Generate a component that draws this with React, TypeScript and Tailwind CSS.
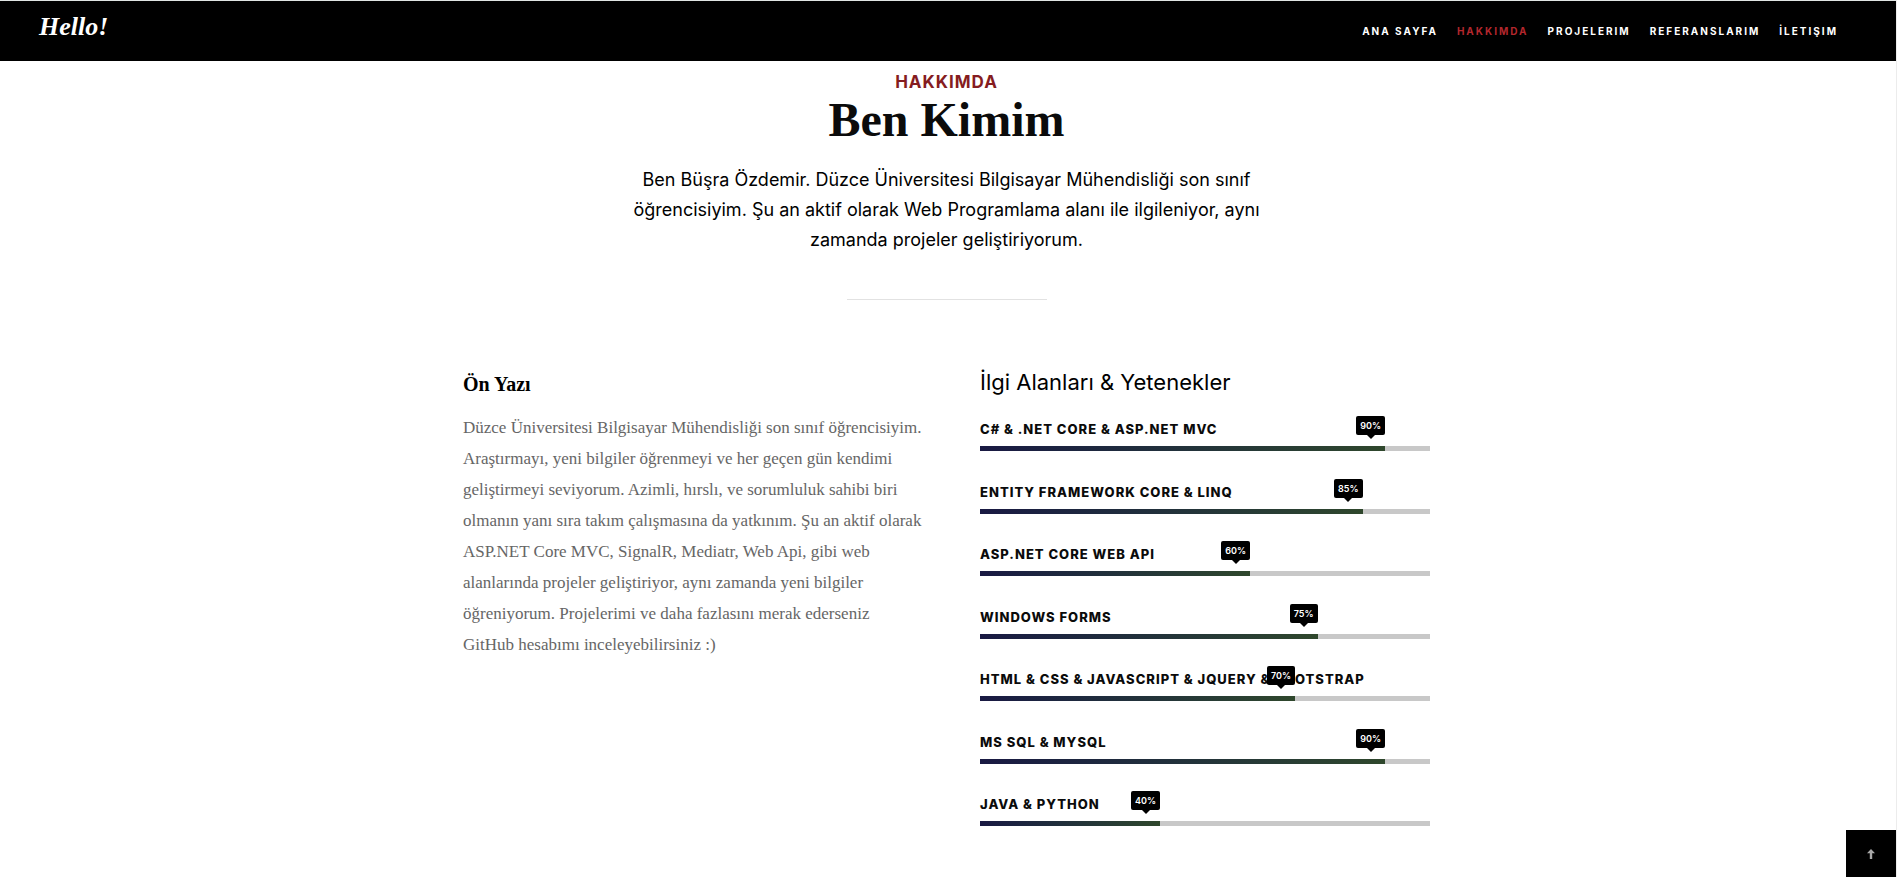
const navItems = [
  { label: "ANA SAYFA", href: "#home", active: false },
  { label: "HAKKIMDA", href: "#about", active: true },
  { label: "PROJELERIM", href: "#projects", active: false },
  { label: "REFERANSLARIM", href: "#references", active: false },
  { label: "İLETIŞIM", href: "#contact", active: false },
];

const skills = [
  { name: "C# & .NET CORE & ASP.NET MVC", value: 90 },
  { name: "ENTITY FRAMEWORK CORE & LINQ", value: 85 },
  { name: "ASP.NET CORE WEB API", value: 60 },
  { name: "WINDOWS FORMS", value: 75 },
  { name: "HTML & CSS & JAVASCRIPT & JQUERY & BOOTSTRAP", value: 70 },
  { name: "MS SQL & MYSQL", value: 90 },
  { name: "JAVA & PYTHON", value: 40 },
];

function Header() {
  return (
    <header className="flex h-[61px] items-center justify-between border-t border-[#e0e5e3] bg-black pr-[58px] pl-[39px]">
      <a
        href="#home"
        className="pb-2 font-['Liberation_Serif',serif] text-[26px] leading-8 font-bold text-white italic"
      >
        Hello!
      </a>
      <nav className="flex gap-[19px]">
        {navItems.map((item) => (
          <a
            key={item.label}
            href={item.href}
            className={`text-[10px] leading-4 font-bold tracking-[2px] ${item.active ? "text-[#b3272d]" : "text-white"}`}
          >
            {item.label}
          </a>
        ))}
      </nav>
    </header>
  );
}

function Skill({ name, value }: { name: string; value: number }) {
  return (
    <li className="odd:h-[63px] even:h-[62px]">
      <h4 className="pt-1 text-[13px] leading-5 font-extrabold tracking-[1px] whitespace-nowrap text-[#0b0b0b]">
        {name}
      </h4>
      <div className="mt-[7px] h-[5px] bg-[#c8c8c8]">
        <div
          className="relative h-full bg-linear-to-r from-[#191943] to-[#2f472c]"
          style={{ width: `${value}%` }}
        >
          <span className="absolute right-0 bottom-[16px] rounded-xs bg-black px-1 text-[9px] leading-[19px] font-semibold text-white">
            {value}%
            <span className="absolute top-full left-1/2 -ml-1 border-x-4 border-t-4 border-x-transparent border-t-black" />
          </span>
        </div>
      </div>
    </li>
  );
}

export default function App() {
  return (
    <div className="min-h-screen border-r border-[#ececec] bg-white font-['Inter',sans-serif]">
      <Header />
      <div className="pr-[3px]">
        <main className="mx-auto w-full max-w-[967px]">
          <section className="flex flex-col items-center pt-[9px] text-center">
            <p className="text-[17px] leading-6 font-bold tracking-[1px] text-[#851c20]">HAKKIMDA</p>
            <h1 className="font-['Liberation_Serif',serif] text-[48px] leading-[52px] font-bold text-[#0b0b0b]">
              Ben Kimim
            </h1>
            <p className="mt-[19px] text-[18px] leading-[30px] text-black">
              Ben Büşra Özdemir. Düzce Üniversitesi Bilgisayar Mühendisliği son sınıf
              <br />
              öğrencisiyim. Şu an aktif olarak Web Programlama alanı ile ilgileniyor, aynı
              <br />
              zamanda projeler geliştiriyorum.
            </p>
            <hr className="mt-11 w-[200px] border-[#e2e2e2]" />
          </section>
          <div className="mt-[67px] grid grid-cols-2 gap-[67px]">
            <section className="font-['Liberation_Serif',serif]">
              <h2 className="pt-[3px] text-[20px] leading-7 font-bold text-black">Ön Yazı</h2>
              <p className="mt-[14px] text-[17px] leading-[31px] whitespace-nowrap text-[#666666]">
                Düzce Üniversitesi Bilgisayar Mühendisliği son sınıf öğrencisiyim.
                <br />
                Araştırmayı, yeni bilgiler öğrenmeyi ve her geçen gün kendimi
                <br />
                geliştirmeyi seviyorum. Azimli, hırslı, ve sorumluluk sahibi biri
                <br />
                olmanın yanı sıra takım çalışmasına da yatkınım. Şu an aktif olarak
                <br />
                ASP.NET Core MVC, SignalR, Mediatr, Web Api, gibi web
                <br />
                alanlarında projeler geliştiriyor, aynı zamanda yeni bilgiler
                <br />
                öğreniyorum. Projelerimi ve daha fazlasını merak ederseniz
                <br />
                GitHub hesabımı inceleyebilirsiniz :)
              </p>
            </section>
            <section>
              <h2 className="text-[22px] leading-[30px] text-black">İlgi Alanları &amp; Yetenekler</h2>
              <ul className="mt-[18px]">
                {skills.map((skill) => (
                  <Skill key={skill.name} name={skill.name} value={skill.value} />
                ))}
              </ul>
            </section>
          </div>
        </main>
      </div>
      <a
        href="#home"
        aria-label="Yukarı"
        className="fixed right-px bottom-0 flex h-[47px] w-[50px] items-center justify-center bg-black"
      >
        <svg width="8" height="10" viewBox="0 0 8 10" fill="#a8a8a8">
          <path d="M4 0 L8 4.2 H5.2 V10 H2.8 V4.2 H0 Z" />
        </svg>
      </a>
    </div>
  );
}
